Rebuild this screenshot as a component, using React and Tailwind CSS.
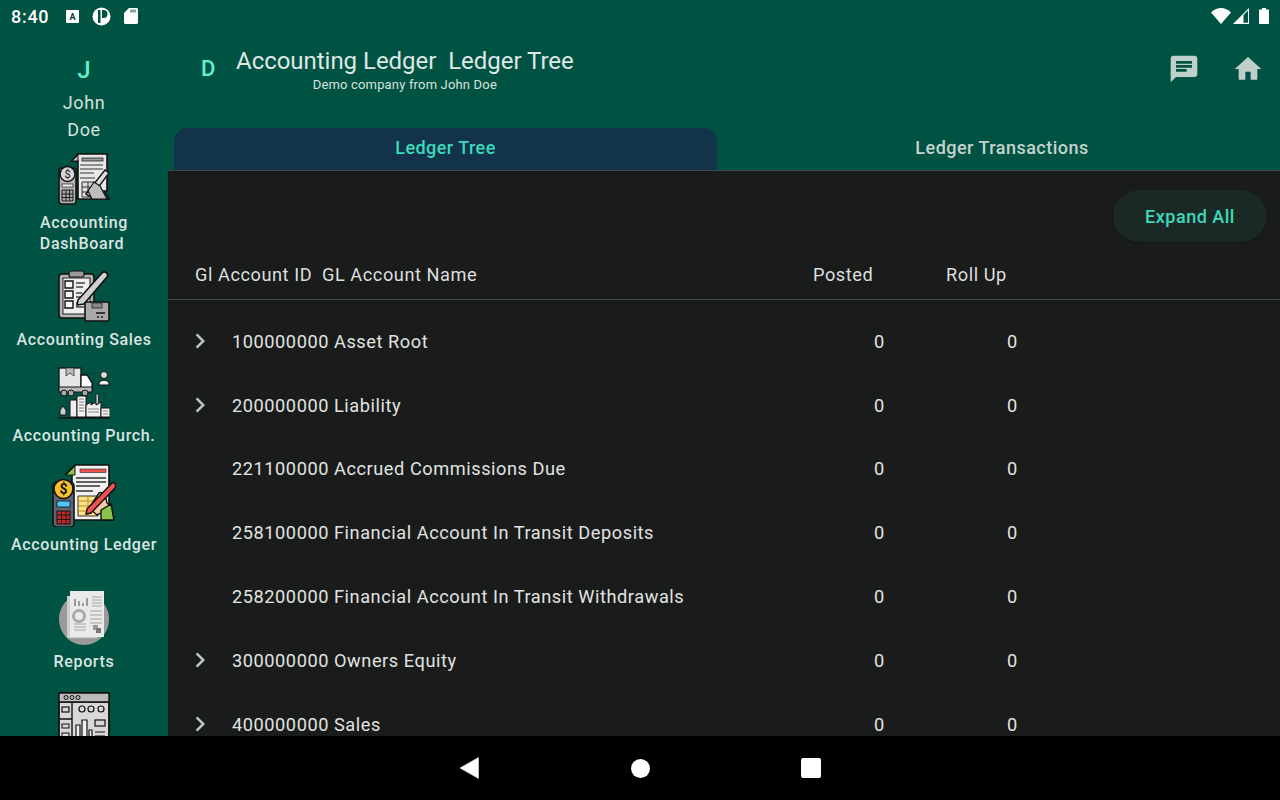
import React from "react";

function DashIcon() {
  return (
    <svg width="52" height="52" viewBox="0 0 52 52">
      <path d="M14 8 L20 1 H49 V38 H46 L51 46 H20 V8Z" fill="#e8e8e8" stroke="#111" strokeWidth="1.6" />
      <path d="M14 8 L20 2 V8Z" fill="#bbb" stroke="#111" strokeWidth="1" />
      <rect x="24" y="5" width="21" height="3" fill="#999" stroke="#222" strokeWidth=".8" />
      <path d="M22 12H45M22 16H45M22 20H36M22 25H37" stroke="#333" strokeWidth="1.2" />
      <path d="M24 29H36V44H24Z M24 34H36M24 39H36M30 29V44" fill="#ddd" stroke="#333" strokeWidth="1" />
      <path d="M28 41 L47 17 L51 20 L33 44Z" fill="#ddd" stroke="#111" strokeWidth="1.4" />
      <path d="M30 38 L36 29 L42 33 L49 46 H34Z" fill="#bdbdbd" stroke="#111" strokeWidth="1.2" />
      <rect x="1" y="15" width="17" height="36" rx="3" fill="#b5b5b5" stroke="#111" strokeWidth="1.6" />
      <circle cx="9.5" cy="21" r="7.5" fill="#d6d6d6" stroke="#111" strokeWidth="1.5" />
      <text x="9.5" y="25" textAnchor="middle" fontSize="11" fontFamily="Roboto, sans-serif" fill="#111">$</text>
      <rect x="4" y="31" width="11" height="3" fill="#eee" stroke="#222" strokeWidth=".7" />
      <path d="M4 37H15V48H4Z M4 41H15M4 44.500H15M8 37V48M11.500 37V48" fill="#aaa" stroke="#111" strokeWidth=".9" />
    </svg>
  );
}

function SalesIcon() {
  return (
    <svg width="52" height="52" viewBox="0 0 52 52">
      <rect x="1" y="4" width="35" height="44" rx="3" fill="#b5b5b5" stroke="#111" strokeWidth="1.6" />
      <rect x="5" y="8" width="27" height="36" fill="#eee" stroke="#222" strokeWidth="1" />
      <rect x="11" y="1" width="15" height="6" rx="2" fill="#999" stroke="#111" strokeWidth="1.2" />
      <path d="M7 11H15V18H7ZM7 21H15V28H7ZM7 31H15V38H7Z" fill="#f4f4f4" stroke="#111" strokeWidth="1.4" />
      <path d="M18 13H27M18 17H25M18 23H24M18 27H22M18 33H22M18 37H26" stroke="#444" strokeWidth="1.4" />
      <path d="M20 30 L44 3 C47 0 51 4 49 7 L26 34 L19 35Z" fill="#d0d0d0" stroke="#111" strokeWidth="1.6" />
      <rect x="27" y="32" width="24" height="19" rx="1.500" fill="#a9a9a9" stroke="#111" strokeWidth="1.6" />
      <rect x="34" y="33" width="10" height="5" fill="#888" stroke="#222" strokeWidth=".8" />
      <path d="M38 43H47M39 47H41M43 47H45" stroke="#111" strokeWidth="1.3" />
    </svg>
  );
}

function PurchIcon() {
  return (
    <svg width="52" height="52" viewBox="0 0 52 52">
      <rect x="1" y="1" width="22" height="22" fill="#e6e6e6" stroke="#111" strokeWidth="1.3" />
      <path d="M8 1V9L12 6L16 9V1Z" fill="#bbb" stroke="#333" strokeWidth=".8" />
      <path d="M23 8H29L34 16V23H23Z" fill="#fff" stroke="#111" strokeWidth="1.3" />
      <rect x="1" y="20" width="33" height="5" fill="#bbb" stroke="#111" strokeWidth="1" />
      <circle cx="6" cy="26" r="3" fill="#aaa" stroke="#111" /><circle cx="13" cy="26" r="3" fill="#aaa" stroke="#111" /><circle cx="27" cy="26" r="3" fill="#aaa" stroke="#111" />
      <circle cx="46" cy="8" r="3.500" fill="#ddd" stroke="#111" /><path d="M41 17C41 12 51 12 51 17V18H41Z" fill="#eee" stroke="#111" />
      <path d="M26 6H40M46 19V44M8 29V42" stroke="#222" strokeWidth=".8" strokeDasharray="1.500 1.500" />
      <rect x="12" y="33" width="7" height="17" fill="#eee" stroke="#111" /><rect x="19" y="29" width="9" height="21" fill="#f4f4f4" stroke="#111" />
      <path d="M21 32H26M21 35H26M21 38H26M21 41H26M21 44H26" stroke="#777" />
      <path d="M28 50V38L33 35V38L38 35V38L43 35V50Z" fill="#eee" stroke="#111" /><rect x="38" y="27" width="2.500" height="10" fill="#bbb" stroke="#111" strokeWidth=".7" />
      <rect x="43" y="41" width="9" height="9" fill="#eee" stroke="#111" /><path d="M30 42H41M30 45H41M45 44H50M45 47H50" stroke="#888" />
      <path d="M2 43L5 39L8 43V48H2Z" fill="#ccc" stroke="#111" /><path d="M0 51H52" stroke="#111" strokeWidth="1.3" />
    </svg>
  );
}

function LedgerIcon() {
  return (
    <svg width="64" height="64" viewBox="0 0 64 64">
      <path d="M14 11 L23 2 H57 V40 L61 57 H20 V11Z" fill="#f2f2f2" stroke="#111" strokeWidth="1.6" />
      <path d="M14 12 L23 3 V12Z" fill="#8bc34a" stroke="#111" strokeWidth="1" />
      <rect x="28" y="6" width="26" height="3.500" fill="#ef5350" stroke="#222" strokeWidth=".6" />
      <path d="M24 15H54M24 19H54M24 23H48M24 28H41" stroke="#333" strokeWidth="1.4" />
      <path d="M26 33H46V53H26Z" fill="#ffe082" stroke="#333" strokeWidth="1" />
      <path d="M26 38H46M26 43H46M26 48H46M36 33V53" stroke="#b58a2a" strokeWidth="1" />
      <path d="M37 45L47 30C51 28 54 33 55 40L60 45L45 52Z" fill="#f5cba7" stroke="#111" strokeWidth="1.4" />
      <path d="M49 47L59 41L62 57H49Z" fill="#8bc34a" stroke="#111" strokeWidth="1.4" />
      <path d="M35 46L60 20C62 18 65 22 63 25L39 50L34 51Z" fill="#ef5350" stroke="#111" strokeWidth="1.4" />
      <rect x="1" y="19" width="21" height="45" rx="4" fill="#5f6672" stroke="#111" strokeWidth="1.6" />
      <circle cx="11.500" cy="26" r="9.500" fill="#fbc02d" stroke="#111" strokeWidth="1.6" />
      <text x="11.500" y="31" textAnchor="middle" fontSize="14" fontWeight="700" fontFamily="Roboto, sans-serif" fill="#111">$</text>
      <rect x="5" y="38" width="13" height="6" fill="#4fc3f7" stroke="#111" strokeWidth=".8" />
      <rect x="5" y="48" width="13" height="13" fill="#c62828" stroke="#111" strokeWidth="1" />
      <path d="M5 52H18M5 56.500H18M9.500 48V61M14 48V61" stroke="#111" strokeWidth=".9" />
    </svg>
  );
}

function ReportsIcon() {
  return (
    <svg width="52" height="54" viewBox="0 0 52 54">
      <path d="M26 3C12 3 1 14 1 28S12 54 26 54 51 42 51 28 40 3 26 3Z" fill="#9a9a9a" />
      <rect x="9" y="5" width="30" height="42" fill="#cfcfcf" />
      <rect x="12" y="0" width="34" height="46" fill="#e9e9e9" />
      <path d="M17 8V15M21 10V15M25 12V15M29 7V15" stroke="#9a9a9a" strokeWidth="2" />
      <path d="M34 6H44M34 9H44M34 12H44M34 15H44M32 20H44M32 24H44M32 28H44M32 32H44M16 33H28M16 36H28M16 39H28" stroke="#a5a5a5" strokeWidth="1.2" />
      <circle cx="21" cy="25" r="5.500" fill="none" stroke="#aaa" strokeWidth="3" />
      <rect x="35" y="34" width="5" height="5" fill="#999" /><rect x="38" y="37" width="5" height="5" fill="#777" />
    </svg>
  );
}

function WindowIcon() {
  return (
    <svg width="52" height="52" viewBox="0 0 52 52" className="shrink-0">
      <rect x="1" y="1" width="50" height="50" rx="2" fill="#d8d8d8" stroke="#111" strokeWidth="1.8" />
      <path d="M1 10H51M14 10V51M1 27H14" stroke="#111" strokeWidth="1.4" />
      <path d="M1 1H51V10H1Z" fill="#bbb" stroke="#111" strokeWidth="1.4" />
      <circle cx="8" cy="5.500" r="2" fill="none" stroke="#111" /><circle cx="14" cy="5.500" r="2" fill="none" stroke="#111" /><circle cx="20" cy="5.500" r="2" fill="none" stroke="#111" />
      <rect x="4" y="15" width="7" height="5" fill="none" stroke="#111" strokeWidth="1.200" />
      <circle cx="24" cy="17" r="3" fill="none" stroke="#111" strokeWidth="1.200" /><circle cx="33" cy="17" r="3" fill="none" stroke="#111" strokeWidth="1.200" /><circle cx="43" cy="17" r="3" fill="none" stroke="#111" strokeWidth="1.200" />
      <path d="M18 46V33H22V46ZM24 46V28H29V46ZM31 46V38H34V46Z" fill="#eee" stroke="#111" strokeWidth="1.200" />
      <rect x="37" y="28" width="10" height="6" fill="none" stroke="#111" strokeWidth="1.200" />
      <rect x="4" y="32" width="7" height="4" fill="none" stroke="#111" /><rect x="4" y="41" width="7" height="4" fill="none" stroke="#111" />
      <path d="M37 40H47M37 44H47M37 48H47" stroke="#111" />
    </svg>
  );
}

const rows = [
  ["100000000 Asset Root", true],
  ["200000000 Liability", true],
  ["221100000 Accrued Commissions Due", false],
  ["258100000 Financial Account In Transit Deposits", false],
  ["258200000 Financial Account In Transit Withdrawals", false],
  ["300000000 Owners Equity", true],
  ["400000000 Sales", true],
];

function Label({ children, className = "" }) {
  return <div className={"text-[16px] leading-[21px] font-medium tracking-[0.65px] text-[#dbe5e1] text-center " + className}>{children}</div>;
}

export default function App() {
  return (
    <div className="w-[1280px] h-[800px] flex flex-col overflow-hidden bg-black font-['Roboto',sans-serif]">
      <div className="flex-1 min-h-0 flex flex-col bg-[#005243]">
        {/* status bar */}
        <div className="h-8 shrink-0 flex items-center pl-[11px] pr-[11px] text-white">
          <span className="text-[18px] font-medium tracking-[0.7px] w-[55px]">8:40</span>
          <svg width="13" height="13" viewBox="0 0 13 13"><rect width="13" height="13" rx="1" fill="#fff" /><text x="6.500" y="10" fontSize="9" fontWeight="700" textAnchor="middle" fontFamily="Roboto, sans-serif" fill="#004438">A</text></svg>
          <svg width="19" height="19" viewBox="0 0 19 19" className="ml-[13px]"><circle cx="9.500" cy="9.500" r="9" fill="#fff" /><rect x="6" y="3" width="2.500" height="13" fill="#005243" /><path d="M10 3h1.500a4 4 0 0 1 0 8H10Z" fill="#005243" /></svg>
          <svg width="14" height="16" viewBox="0 0 14 16" className="ml-[13px]"><path d="M5 0H12.500C13.300 0 14 .7 14 1.500V14.500C14 15.300 13.300 16 12.500 16H1.500C.7 16 0 15.300 0 14.500V5Z" fill="#fff" /><path d="M7 1.500V4.500M9 1.500V4.500M11 1.500V4.500" stroke="#005243" strokeWidth="1" /></svg>
          <div className="flex-1" />
          <svg width="20" height="16" viewBox="0 0 20 16"><path d="M0 4.500C5.500-1.500 14.500-1.500 20 4.500L10 16Z" fill="#fff" /></svg>
          <svg width="16" height="16" viewBox="0 0 16 16" className="ml-[2px]"><path d="M16 0V16H0Z" fill="#fff" /><path d="M10.500 7V14.700H15V2.500Z" fill="#005243" /></svg>
          <svg width="10" height="16" viewBox="0 0 10 16" className="ml-[10px]"><path d="M3 0H7V1.500H9C9.600 1.500 10 1.900 10 2.500V15C10 15.600 9.600 16 9 16H1C.4 16 0 15.600 0 15V2.500C0 1.900.4 1.500 1 1.500H3Z" fill="#fff" /></svg>
        </div>

        <div className="flex-1 min-h-0 flex">
          {/* sidebar */}
          <aside className="w-[168px] shrink-0 overflow-hidden flex flex-col items-center pt-[23px]">
            <div className="h-[30px] text-[24px] leading-[30px] font-medium text-[#5ff0cd]">J</div>
            <div className="mt-[4px] text-[18px] leading-[27px] tracking-[0.6px] text-[#d5e2de] text-center">John<br />Doe</div>
            <div className="mt-[10px]"><DashIcon /></div>
            <Label className="mt-[7px]">Accounting<br /><span className="pr-[4px]">DashBoard</span></Label>
            <div className="mt-[16px]"><SalesIcon /></div>
            <Label className="mt-[7px] whitespace-nowrap">Accounting Sales</Label>
            <div className="mt-[17px]"><PurchIcon /></div>
            <Label className="mt-[6px] whitespace-nowrap">Accounting Purch.</Label>
            <div className="mt-[17px]"><LedgerIcon /></div>
            <Label className="mt-[7px] whitespace-nowrap">Accounting Ledger</Label>
            <div className="mt-[36px]"><ReportsIcon /></div>
            <Label className="mt-[6px]">Reports</Label>
            <div className="mt-[20px]"><WindowIcon /></div>
          </aside>

          {/* main */}
          <main className="flex-1 min-w-0 flex flex-col">
            <header className="h-[96px] shrink-0 flex items-start">
              <div className="w-[68px] pl-[33px] pt-[23px] text-[22px] leading-[28px] font-medium text-[#5ff0cd]">D</div>
              <div className="pt-[14px] flex flex-col items-center">
                <div className="text-[24px] leading-[30px] tracking-[-0.03px] text-[#dfe8e4] whitespace-pre">Accounting Ledger  Ledger Tree</div>
                <div className="text-[13px] leading-[18px] tracking-[0.17px] text-[#d5e2de]">Demo company from John Doe</div>
              </div>
              <div className="flex-1" />
              <div className="flex gap-[32px] pt-[21px] pr-[16px]">
                <svg width="32" height="32" viewBox="0 0 24 24" fill="#bfcfca"><path d="M20 2H4c-1.100 0-1.990.9-1.990 2L2 22l4-4h14c1.100 0 2-.9 2-2V4c0-1.100-.9-2-2-2zM6 9h12v2H6V9zm8 5H6v-2h8v2zm4-6H6V6h12v2z" /></svg>
                <svg width="32" height="32" viewBox="0 0 24 24" fill="#bfcfca"><path d="M10 20v-6h4v6h5v-8h3L12 3 2 12h3v8z" /></svg>
              </div>
            </header>

            <div className="h-[43px] shrink-0 flex border-b border-[#3f4946] pl-[6px]">
              <div className="w-[543px] h-[42px] rounded-t-[14px] bg-[#123349] flex items-center justify-center pb-[3px] text-[18px] font-medium tracking-[0.45px] text-[#3cd9bb]">Ledger Tree</div>
              <div className="flex-1 ml-[7px] h-[42px] flex items-center justify-center pb-[3px] text-[18px] font-medium tracking-[0.47px] text-[#c5d2ce]">Ledger Transactions</div>
            </div>

            <div className="flex-1 min-h-0 overflow-hidden bg-[#191c1b]">
              <div className="flex justify-end pt-[19px] pr-[13px]">
                <div className="w-[154px] h-[52px] rounded-full bg-[#1a2826] flex items-center justify-center text-[18px] font-medium tracking-[0.5px] text-[#3cd9bb] shadow-[0_1px_2px_rgba(0,0,0,0.25)]">Expand All</div>
              </div>
              <div className="h-[58px] pt-[9px] flex items-center border-b border-[#3f4946] text-[18.200px] tracking-[0.55px] text-[#dedfdf] whitespace-pre">
                <div className="w-[27px]" />
                <div className="w-[127px]">Gl Account ID</div>
                <div className="w-[491px]">GL Account Name</div>
                <div className="w-[133px]">Posted</div>
                <div>Roll Up</div>
              </div>
              <div className="pt-[9.500px]">
                {rows.map(([name, chevron]) => (
                  <div key={name} className="h-[63.800px] flex items-center text-[18.200px] tracking-[0.55px] text-[#e1e3e1]">
                    <div className="w-[64px] pl-[17px] flex">
                      {chevron && (
                        <svg width="30" height="30" viewBox="0 0 24 24" fill="#bcc7c3"><path d="M8.590 16.590 13.170 12 8.590 7.410 10 6l6 6-6 6z" /></svg>
                      )}
                    </div>
                    <div className="w-[642px] whitespace-nowrap">{name}</div>
                    <div className="w-[10px] text-center">0</div>
                    <div className="w-[123px]" />
                    <div className="w-[10px] text-center">0</div>
                  </div>
                ))}
              </div>
            </div>
          </main>
        </div>
      </div>

      {/* nav bar */}
      <div className="h-16 shrink-0 bg-black flex items-center">
        <svg width="19" height="22" viewBox="0 0 19 22" className="ml-[460px]"><path d="M18.500 0.500V21.500L0 11Z" fill="#fff" stroke="#fff" strokeWidth="0.500" strokeLinejoin="round" /></svg>
        <div className="ml-[152px] w-[19px] h-[19px] rounded-full bg-white" />
        <div className="ml-[151px] w-[19.500px] h-[20px] rounded-[2px] bg-white" />
      </div>
    </div>
  );
}
